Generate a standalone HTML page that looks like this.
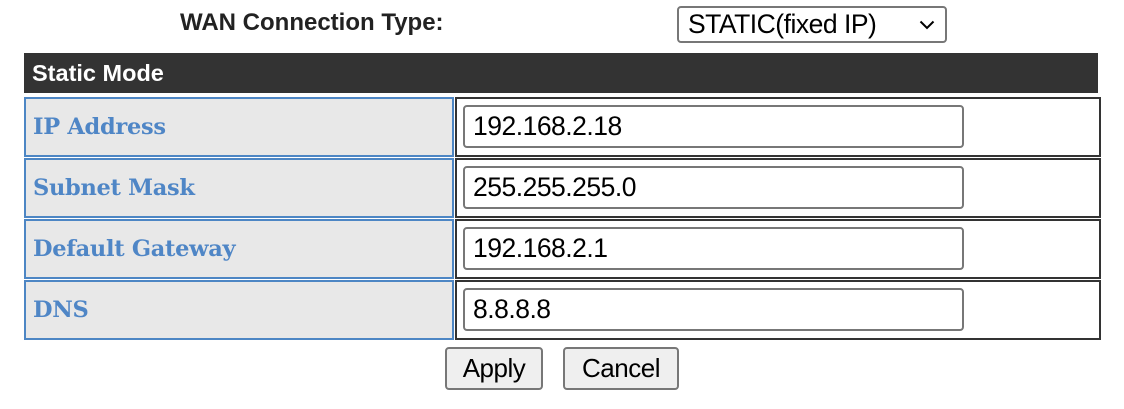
<!DOCTYPE html>
<html><head><style>
body{margin:0;width:1124px;height:409px;background:#fff;position:relative;overflow:hidden;font-family:"Liberation Sans",Arial,sans-serif}
.a{position:absolute;box-sizing:border-box}
.lab{border:2px solid #4d86c4;background:#e8e8e8;color:#4f86c6;font-family:"DejaVu Serif","Liberation Serif",serif;font-weight:bold;font-size:22.5px;padding-left:7px;display:flex;align-items:center;letter-spacing:-0.3px}
.val{border:2px solid #333;background:#fff}
.inp{border:2px solid #777;border-radius:4px;background:#fff;font-size:26.5px;padding-left:8px;display:flex;align-items:center;color:#000;letter-spacing:-0.5px}
.btn{border:2px solid #777;border-radius:4px;background:#efefef;font-size:26px;display:flex;align-items:center;justify-content:center;letter-spacing:-0.5px}
</style></head><body>
<div class="a" style="left:180px;top:9px;font-weight:bold;font-size:24px;color:#222">WAN Connection Type:</div>
<div class="a" style="left:677px;top:6px;width:270px;height:37px;border:2px solid #777;border-radius:4px;font-size:26.5px;padding-left:9px;line-height:32px;letter-spacing:-0.5px">STATIC(fixed IP)
<svg style="position:absolute;right:10px;top:12px" width="16" height="10" viewBox="0 0 16 10"><path d="M1.5 1.5 L8 8 L14.5 1.5" fill="none" stroke="#000" stroke-width="2"/></svg></div>
<div class="a" style="left:24px;top:53px;width:1074px;height:40px;background:#333;color:#fff;font-weight:bold;font-size:23.5px;padding-left:8px;line-height:40px">Static Mode</div>

<div class="a lab" style="left:24px;top:97px;width:430px;height:60px">IP Address</div>
<div class="a val" style="left:455px;top:97px;width:646px;height:60px"></div>
<div class="a inp" style="left:463px;top:105px;width:501px;height:43px">192.168.2.18</div>

<div class="a lab" style="left:24px;top:158px;width:430px;height:60px">Subnet Mask</div>
<div class="a val" style="left:455px;top:158px;width:646px;height:60px"></div>
<div class="a inp" style="left:463px;top:166px;width:501px;height:43px">255.255.255.0</div>

<div class="a lab" style="left:24px;top:219px;width:430px;height:60px">Default Gateway</div>
<div class="a val" style="left:455px;top:219px;width:646px;height:60px"></div>
<div class="a inp" style="left:463px;top:227px;width:501px;height:43px">192.168.2.1</div>

<div class="a lab" style="left:24px;top:280px;width:430px;height:60px">DNS</div>
<div class="a val" style="left:455px;top:280px;width:646px;height:60px"></div>
<div class="a inp" style="left:463px;top:288px;width:501px;height:43px">8.8.8.8</div>

<div class="a btn" style="left:445px;top:347px;width:98px;height:43px">Apply</div>
<div class="a btn" style="left:563px;top:347px;width:116px;height:43px">Cancel</div>
</body></html>
